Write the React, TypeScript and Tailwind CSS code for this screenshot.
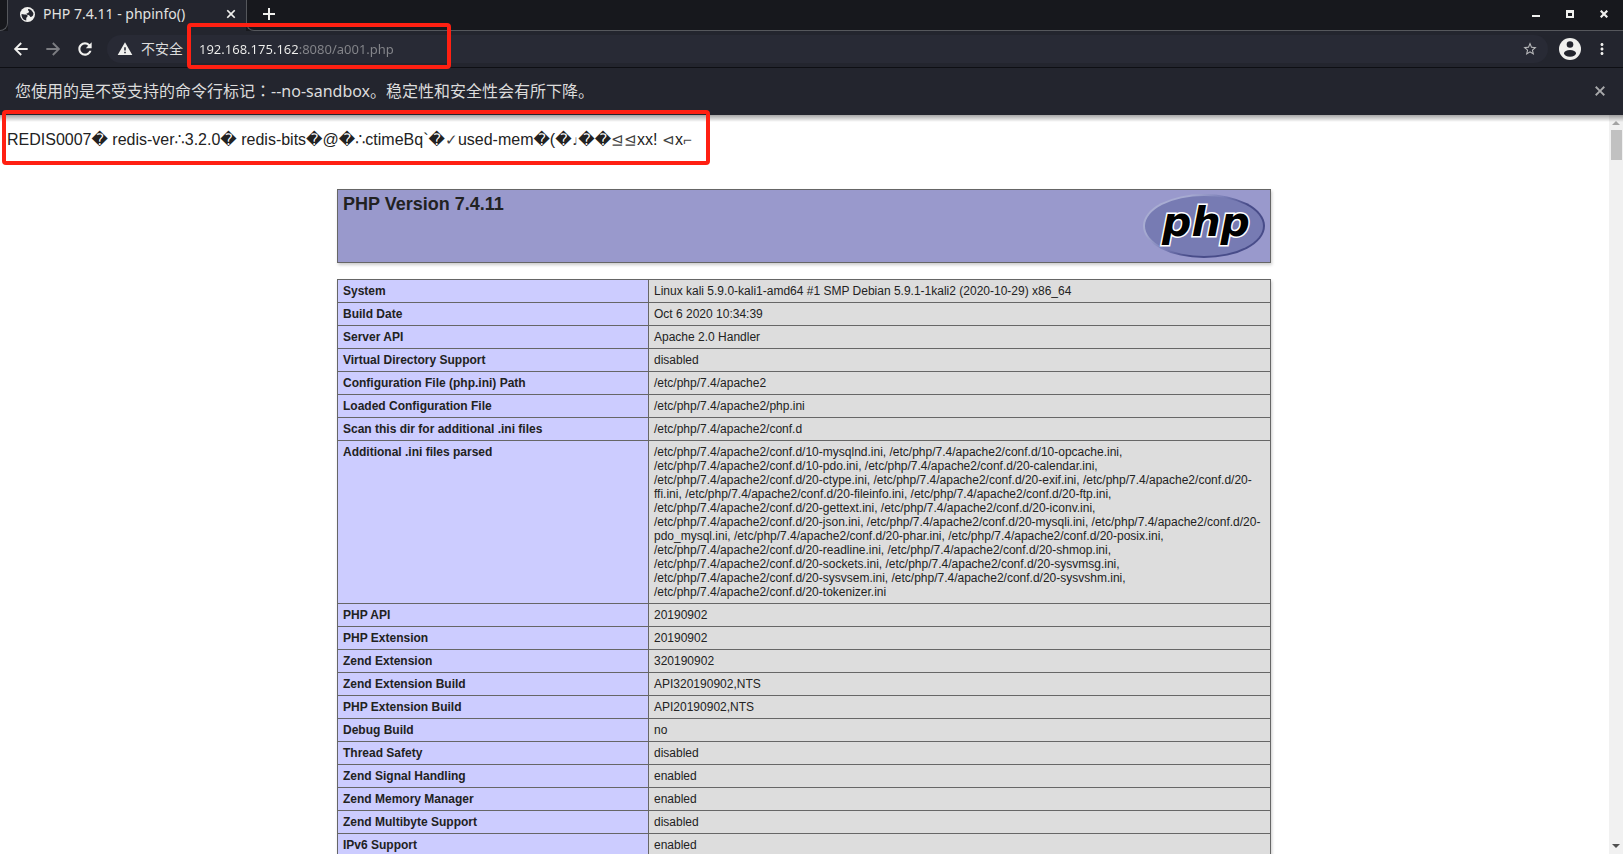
import React from "react";

const confd = "/etc/php/7.4/apache2/conf.d/";
const iniFiles = [
  "10-mysqlnd", "10-opcache", "10-pdo", "20-calendar", "20-ctype", "20-exif", "20-ffi",
  "20-fileinfo", "20-ftp", "20-gettext", "20-iconv", "20-json", "20-mysqli", "20-pdo_mysql",
  "20-phar", "20-posix", "20-readline", "20-shmop", "20-sockets", "20-sysvmsg", "20-sysvsem",
  "20-sysvshm", "20-tokenizer",
];

const rows: [string, string][] = [
  ["System", "Linux kali 5.9.0-kali1-amd64 #1 SMP Debian 5.9.1-1kali2 (2020-10-29) x86_64"],
  ["Build Date", "Oct 6 2020 10:34:39"],
  ["Server API", "Apache 2.0 Handler"],
  ["Virtual Directory Support", "disabled"],
  ["Configuration File (php.ini) Path", "/etc/php/7.4/apache2"],
  ["Loaded Configuration File", "/etc/php/7.4/apache2/php.ini"],
  ["Scan this dir for additional .ini files", "/etc/php/7.4/apache2/conf.d"],
  ["Additional .ini files parsed", iniFiles.map((f) => `${confd}${f}.ini`).join(", ")],
  ["PHP API", "20190902"],
  ["PHP Extension", "20190902"],
  ["Zend Extension", "320190902"],
  ["Zend Extension Build", "API320190902,NTS"],
  ["PHP Extension Build", "API20190902,NTS"],
  ["Debug Build", "no"],
  ["Thread Safety", "disabled"],
  ["Zend Signal Handling", "enabled"],
  ["Zend Memory Manager", "enabled"],
  ["Zend Multibyte Support", "disabled"],
  ["IPv6 Support", "enabled"],
];

function Icon({ d, size = 20, className = "" }: { d: string; size?: number; className?: string }) {
  return (
    <svg viewBox="0 0 24 24" width={size} height={size} fill="currentColor" className={className} aria-hidden="true">
      <path d={d} />
    </svg>
  );
}

const back = "M20 10.8H7.83l5.2-5.2L11.4 4l-8 8 8 8 1.63-1.6-5.2-5.2H20v-2.4z";
const forward = "M12.6 4l-1.63 1.6 5.2 5.2H4v2.4h12.17l-5.2 5.2L12.6 20l8-8z";
const reload = "M17.65 6.35C16.2 4.9 14.21 4 12 4c-4.42 0-7.99 3.58-7.99 8s3.57 8 7.99 8c3.73 0 6.84-2.55 7.73-6h-2.6c-.82 2.1-2.8 3.5-5.13 3.5-3 0-5.5-2.5-5.5-5.5s2.5-5.5 5.5-5.5c1.5 0 2.8.6 3.8 1.6L13 11h7V4l-2.35 2.35z";
const warning = "M1 21h22L12 2 1 21zm12.2-2.6h-2.4V16h2.4v2.4zm0-4.2h-2.4V9.4h2.4v4.8z";
const star = "M22 9.24l-7.19-.62L12 2 9.19 8.63 2 9.24l5.46 4.73L5.82 21 12 17.27 18.18 21l-1.63-7.03L22 9.24zM12 15.4l-3.76 2.27 1-4.28-3.32-2.88 4.38-.38L12 6.1l1.71 4.04 4.38.38-3.32 2.88 1 4.28L12 15.4z";
const cross = "M19.4 6.6L17.4 4.6 12 10 6.6 4.6 4.6 6.6 10 12 4.6 17.4 6.6 19.4 12 14 17.4 19.4 19.4 17.4 14 12z";
const more = "M12 8c1.1 0 2-.9 2-2s-.9-2-2-2-2 .9-2 2 .9 2 2 2zm0 2c-1.1 0-2 .9-2 2s.9 2 2 2 2-.9 2-2-.9-2-2-2zm0 6c-1.1 0-2 .9-2 2s.9 2 2 2 2-.9 2-2-.9-2-2-2z";

function TabStrip() {
  return (
    <div className="flex h-[31px] shrink-0 bg-[#17181d]">
      <div className="w-2 rounded-br-lg border-r border-b border-[#55575c]" />
      <div className="flex w-[238px] items-center bg-[#23252e] pr-2 pb-[3px] pl-3">
        <svg viewBox="0 0 24 24" width="15" height="15" aria-hidden="true">
          <circle cx="12" cy="12" r="12" fill="#f0f0ee" />
          <path d="M2.5 11C5 12 9 11 12 13c1 3-2 3-2 5v3.5C5 21 2 16 2.5 11z" fill="#23252e" />
          <path d="M13 3c4 0 7 3 8.500 7 0 4-2 6-5 6-1-4-5-3-6-5 0-2 4-1 4-4-1-1-2-2-1.500-4z" fill="#23252e" />
        </svg>
        <span className="ml-2 flex-1 truncate text-[14px] leading-5 text-[#e2e2e0]">PHP 7.4.11 - phpinfo()</span>
        <button aria-label="Close tab" className="text-[#f0f0ee]"><Icon d={cross} size={14} /></button>
      </div>
      <div className="flex flex-1 items-center rounded-bl-lg border-b border-l border-[#55575c] pr-[15px] pb-0.5 pl-[15px]">
        <button aria-label="New tab" className="text-[#f0f0ee]">
          <svg width="14" height="14" viewBox="0 0 14 14" aria-hidden="true">
            <path d="M7 1v12M1 7h12" stroke="currentColor" strokeWidth="2" />
          </svg>
        </button>
        <div className="ml-auto flex items-center gap-[26px] text-[#f0f0ee]">
          <button aria-label="Minimize">
            <svg width="8" height="8" viewBox="0 0 8 8"><path d="M0 5h8v2H0z" fill="currentColor" /></svg>
          </button>
          <button aria-label="Maximize">
            <svg width="8" height="8" viewBox="0 0 8 8"><path d="M0 0h8v8H0zM2 3v3h4V3z" fill="currentColor" fillRule="evenodd" /></svg>
          </button>
          <button aria-label="Close window">
            <svg width="8" height="8" viewBox="0 0 8 8"><path d="M0.700 0.700l6.600 6.600M7.300 0.700L0.700 7.300" stroke="currentColor" strokeWidth="2.200" /></svg>
          </button>
        </div>
      </div>
    </div>
  );
}

function Toolbar() {
  return (
    <div className="flex h-[37px] shrink-0 items-center border-b border-[#0e0f14] bg-[#23252e] pr-3 pl-[11px] text-[#f0f0ee]">
      <div className="flex items-center gap-3">
        <button aria-label="Back"><Icon d={back} /></button>
        <button aria-label="Forward" className="text-[#7c7d82]"><Icon d={forward} /></button>
        <button aria-label="Reload"><Icon d={reload} /></button>
      </div>
      <div className="ml-3 flex h-7 flex-1 items-center rounded-full bg-[#282a35] px-[10px]">
        <Icon d={warning} size={16} />
        <span className="ml-2 text-[14px] leading-5 text-[#dcdcdc]">不安全</span>
        <div className="relative ml-4 flex flex-1">
          <input
            aria-label="Address"
            defaultValue="192.168.175.162:8080/a001.php"
            className="w-full bg-[linear-gradient(90deg,#f0f0ee_100px,#85868b_100px)] bg-clip-text text-[13px] leading-5 text-transparent outline-none"
          />
          <div className="pointer-events-none absolute -top-4 -left-3 h-[46px] w-[264px] rounded border-4 border-[#ff2012]" />
        </div>
        <button aria-label="Bookmark" className="text-[#b8b9bb]"><Icon d={star} size={16} /></button>
      </div>
      <button aria-label="Profile" className="ml-[11px]">
        <svg viewBox="0 0 22 22" width="22" height="22" aria-hidden="true">
          <circle cx="11" cy="11" r="11" fill="currentColor" />
          <circle cx="11" cy="6.5" r="3.3" fill="#23252e" />
          <ellipse cx="11" cy="15.300" rx="6" ry="3.400" fill="#23252e" />
        </svg>
      </button>
      <button aria-label="Menu" className="ml-3"><Icon d={more} size={18} /></button>
    </div>
  );
}

function InfoBar() {
  return (
    <div className="flex h-[47px] shrink-0 items-center bg-[#23252e] px-[15px] pb-0.5 text-[#dcdcdc]">
      <p className="flex-1 text-[16px] leading-6">
        您使用的是不受支持的命令行标记<span className="font-['Noto_Sans_CJK_TC',sans-serif]" lang="zh-TW">：</span>--no-sandbox。稳定性和安全性会有所下降。
      </p>
      <button aria-label="Dismiss" className="text-[#a8a9ab]"><Icon d={cross} size={16} /></button>
    </div>
  );
}

function PhpLogo() {
  return (
    <svg viewBox="0 0 122 64" width="122" height="64" className="overflow-visible" role="img" aria-label="PHP logo">
      <defs>
        <linearGradient id="rim" x1="0" y1="0" x2="1" y2="0.6">
          <stop offset="0" stopColor="#aeb2d5" />
          <stop offset="0.3" stopColor="#a5a9d0" />
          <stop offset="0.5" stopColor="#7c80b8" />
          <stop offset="0.7" stopColor="#484c89" />
          <stop offset="1" stopColor="#484c89" />
        </linearGradient>
      </defs>
      <ellipse cx="61" cy="32" rx="61" ry="32" fill="url(#rim)" />
      <ellipse cx="61" cy="32" rx="59" ry="30" fill="#777bb3" />
      <text
        x="63" y="42" textAnchor="middle" fontSize="41" fontStyle="italic" fontWeight="700"
        fontFamily="'DejaVu Sans', sans-serif" fill="#000" stroke="#fff" strokeWidth="3" paintOrder="stroke"
      >
        php
      </text>
    </svg>
  );
}

function Scrollbar() {
  return (
    <div className="flex w-[14px] shrink-0 flex-col items-center bg-[#f1f1f1] py-[6px]" aria-hidden="true">
      <svg width="8" height="4" viewBox="0 0 8 4"><path d="M4 0l4 4H0z" fill="#a3a3a3" /></svg>
      <div className="mt-[5px] h-[30px] w-[11px] bg-[#c1c1c1]" />
      <svg width="8" height="4" viewBox="0 0 8 4" className="mt-auto"><path d="M0 0h8L4 4z" fill="#505050" /></svg>
    </div>
  );
}

function Thin({ children }: { children: React.ReactNode }) {
  return <span className="font-['DejaVu_Sans_Light','DejaVu_Sans',sans-serif] text-[15px] font-extralight text-[#444444]">{children}</span>;
}

export default function App() {
  return (
    <div className="flex h-screen flex-col bg-white font-['Noto_Sans','Noto_Sans_CJK_SC',sans-serif]">
      <TabStrip />
      <Toolbar />
      <InfoBar />
      <div className="relative flex min-h-0 flex-1">
        <div className="pointer-events-none absolute inset-x-0 top-0 h-[7px] bg-linear-to-b from-black/35 to-transparent" />
        <div className="pointer-events-none absolute -top-[5px] left-[2px] h-[55px] w-[708px] rounded border-4 border-[#ff2012]" />
        <main className="min-w-0 flex-1 overflow-hidden pt-[13px] pr-2 pl-[7px] font-['Liberation_Sans','DejaVu_Sans',sans-serif] text-[#222222]">
          <p className="h-[61px] text-[16px] leading-6">
            REDIS0007� redis-ver∴3.2.0� redis-bits�@�∴ctimeBq`�<Thin>✓</Thin>used-mem�(�
            <span className="font-['DejaVu_Sans_Mono',monospace] text-[11px]">♩</span>��<Thin>⊴⊴</Thin>xx! <Thin>⊲</Thin>x<Thin>⌐</Thin>
          </p>
          <div className="mx-auto w-[934px] max-w-full">
            <div className="flex h-[74px] items-start justify-between border border-[#666666] bg-[#9999cc] px-[5px] py-1 shadow-[1px_2px_3px_#cccccc]">
              <h1 className="text-[18px] leading-5 font-bold">PHP Version 7.4.11</h1>
              <PhpLogo />
            </div>
            <table className="mt-4 w-full border-collapse text-[12px] leading-[14px] shadow-[1px_2px_3px_#cccccc]">
              <tbody>
                {rows.map(([name, value]) => (
                  <tr key={name}>
                    <th scope="row" className="w-[311px] border border-[#666666] bg-[#ccccff] px-[5px] py-1 text-left align-top font-bold">{name}</th>
                    <td className="border border-[#666666] bg-[#dddddd] px-[5px] py-1 align-top">{value}</td>
                  </tr>
                ))}
              </tbody>
            </table>
          </div>
        </main>
        <Scrollbar />
      </div>
    </div>
  );
}
